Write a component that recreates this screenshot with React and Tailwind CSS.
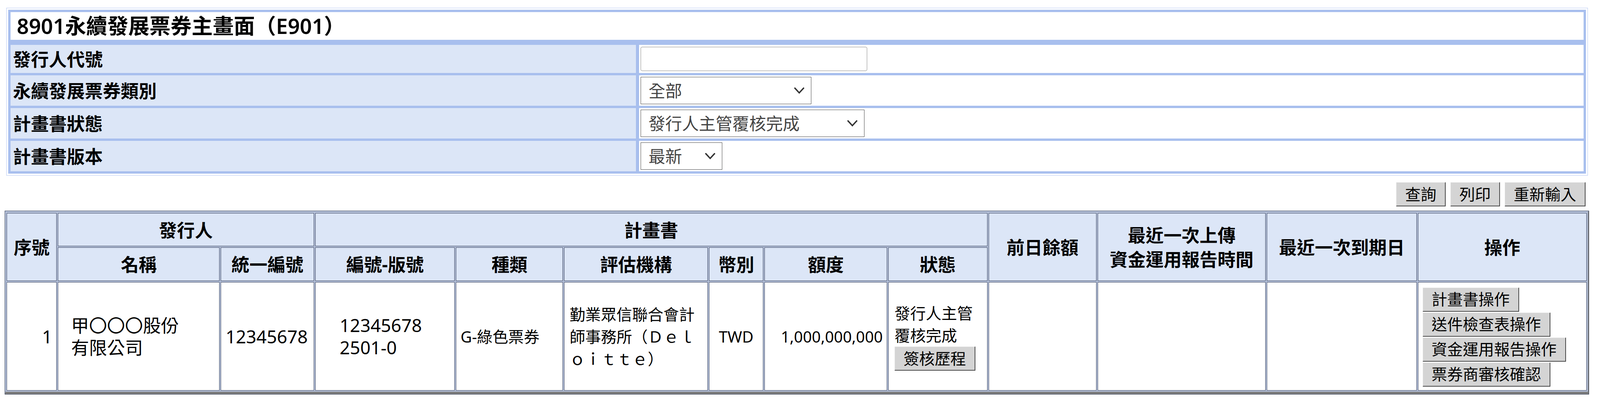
import React from "react";

const FONT = "font-['Noto_Sans','Noto_Sans_CJK_TC',sans-serif]";

function Chevron() {
  return (
    <svg width="26" height="17" viewBox="0 0 26 17" className="shrink-0">
      <polyline points="2,2 13,14 24,2" fill="none" stroke="#333333" strokeWidth="3.5" strokeLinecap="square" />
    </svg>
  );
}

function FakeSelect({ value, width }) {
  return (
    <div className={`${width} h-[70px] flex items-center justify-between pl-[19px] pr-[17px] bg-white border border-[#4a4a4a] text-[43px] text-[#444444]`}>
      <span className="leading-none">{value}</span>
      <Chevron />
    </div>
  );
}

function GrayButton({ children }) {
  return (
    <button
      type="button"
      className="h-[62px] px-[22px] bg-[#d4d4d4] text-[40px] leading-none text-black border-t border-l border-t-[#ececec] border-l-[#ececec] border-b-2 border-r-2 border-b-[#4a4a4a] border-r-[#4a4a4a] whitespace-nowrap"
    >
      {children}
    </button>
  );
}

function FilterRow({ label, height, children }) {
  return (
    <div className={`flex gap-[8px] ${height}`}>
      <div className="w-[39.76%] shrink-0 bg-[#dce6f7] flex items-center pl-[6px] text-[46px] font-bold text-black whitespace-nowrap">
        {label}
      </div>
      <div className="flex-1 bg-white flex items-center pl-[4px]">{children}</div>
    </div>
  );
}

const TH = "border border-[#3c4660] bg-[#dce6f7] text-[46px] font-bold leading-[62px] text-center align-middle p-0 text-black";
const TD = "border border-[#3c4660] bg-white align-middle p-0 font-normal text-black";

export default function App() {
  return (
    <div className={`${FONT} bg-white w-full h-[1038px] pt-[20px] text-black overflow-hidden`}>
      {/* Filter box */}
      <div className="ml-[16px] mr-[31px] border border-[#b7c9f2] p-[4px]">
        <div className="bg-[#a8bfee] p-[6px] flex flex-col">
          <div className="h-[71px] bg-white flex items-center pl-[16px] text-[54px] font-semibold text-black">
            8901永續發展票券主畫面（E901）
          </div>
          <div className="mt-[13px] flex flex-col gap-[6px]">
            <FilterRow label="發行人代號" height="h-[72px]">
              <div className="w-[580px] h-[62px] rounded-[4px] border border-[#8a8a8a] bg-white" />
            </FilterRow>
            <FilterRow label="永續發展票券類別" height="h-[78px]">
              <FakeSelect value="全部" width="w-[437px]" />
            </FilterRow>
            <FilterRow label="計畫書狀態" height="h-[78px]">
              <FakeSelect value="發行人主管覆核完成" width="w-[573px]" />
            </FilterRow>
            <FilterRow label="計畫書版本" height="h-[78px]">
              <FakeSelect value="最新" width="w-[209px]" />
            </FilterRow>
          </div>
        </div>
      </div>

      {/* Action buttons */}
      <div className="ml-[12px] mr-[37px] mt-[17px] flex justify-end gap-[12px]">
        <GrayButton>查詢</GrayButton>
        <GrayButton>列印</GrayButton>
        <GrayButton>重新輸入</GrayButton>
      </div>

      {/* Result table */}
      <div className="ml-[12px] mr-[28px] mt-[11px] border border-[#2d3850]">
        <table className="w-full table-fixed border-separate border-spacing-[3px] bg-[#b3bfd8] border-t-2 border-l border-r-2 border-b-[6px] border-t-[#b3bfd8] border-l-[#b3bfd8] border-r-[#7c7c7c] border-b-[#7c7c7c]">
          <colgroup>
            <col className="w-[3.19%]" />
            <col className="w-[10.34%]" />
            <col className="w-[5.94%]" />
            <col className="w-[8.92%]" />
            <col className="w-[6.84%]" />
            <col className="w-[9.18%]" />
            <col className="w-[3.46%]" />
            <col className="w-[7.83%]" />
            <col className="w-[6.33%]" />
            <col className="w-[6.89%]" />
            <col className="w-[10.73%]" />
            <col className="w-[9.57%]" />
            <col className="w-[10.78%]" />
          </colgroup>
          <thead>
            <tr className="h-[85px]">
              <th rowSpan={2} className={TH}>序號</th>
              <th colSpan={2} className={TH}>發行人</th>
              <th colSpan={6} className={TH}>計畫書</th>
              <th rowSpan={2} className={TH}>前日餘額</th>
              <th rowSpan={2} className={TH}>
                最近一次上傳
                <br />
                資金運用報告時間
              </th>
              <th rowSpan={2} className={TH}>最近一次到期日</th>
              <th rowSpan={2} className={TH}>操作</th>
            </tr>
            <tr className="h-[86px]">
              <th className={TH}>名稱</th>
              <th className={TH}>統一編號</th>
              <th className={TH}>編號-版號</th>
              <th className={TH}>種類</th>
              <th className={TH}>評估機構</th>
              <th className={TH}>幣別</th>
              <th className={TH}>額度</th>
              <th className={TH}>狀態</th>
            </tr>
          </thead>
          <tbody>
            <tr className="h-[278px]">
              <td className={`${TD} text-right pr-[10px] text-[46px] leading-[57px]`}>1</td>
              <td className={`${TD} text-left pl-[33px] text-[46px] leading-[57px]`}>
                甲〇〇〇股份
                <br />
                有限公司
              </td>
              <td className={`${TD} text-left pl-[11px] text-[46px] leading-[57px]`}>12345678</td>
              <td className={`${TD} text-left pl-[62px] text-[46px] leading-[57px]`}>
                12345678
                <br />
                2501-0
              </td>
              <td className={`${TD} text-left pl-[11px] text-[40px] leading-[57px]`}>G-綠色票券</td>
              <td className={`${TD} text-left pl-[13px] pr-[13px] text-[40px] leading-[57px] break-all`}>
                勤業眾信聯合會計師事務所（Ｄｅｌｏｉｔｔｅ）
              </td>
              <td className={`${TD} text-center text-[40px] leading-[57px]`}>TWD</td>
              <td className={`${TD} text-right pr-[10px] text-[40px] leading-[57px]`}>1,000,000,000</td>
              <td className={`${TD} text-left pl-[15px] text-[40px] leading-[57px]`}>
                <div>
                  發行人主管
                  <br />
                  覆核完成
                </div>
                <div className="flex">
                  <GrayButton>簽核歷程</GrayButton>
                </div>
              </td>
              <td className={TD}></td>
              <td className={TD}></td>
              <td className={TD}></td>
              <td className={`${TD} pl-[11px]`}>
                <div className="flex flex-col items-start gap-[2px] pt-[3px]">
                  <GrayButton>計畫書操作</GrayButton>
                  <GrayButton>送件檢查表操作</GrayButton>
                  <GrayButton>資金運用報告操作</GrayButton>
                  <GrayButton>票券商審核確認</GrayButton>
                </div>
              </td>
            </tr>
          </tbody>
        </table>
      </div>
    </div>
  );
}
